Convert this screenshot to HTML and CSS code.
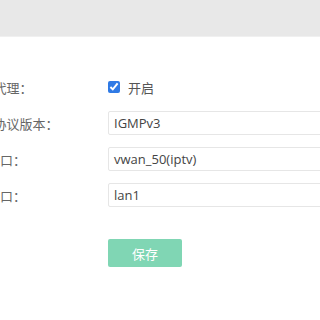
FILE: index.html
```html
<!DOCTYPE html>
<html lang="zh-CN">
<head>
    <meta charset="UTF-8">
    <meta name="viewport" content="width=device-width, initial-scale=1.0">
    <title>IGMP代理</title>
    <link rel="stylesheet" href="styles.css">
</head>
<body>
    <div class="topbar"></div>
    <form class="igmp-form">
        <div class="form-row">
            <label class="form-row__label">IGMP代理：</label>
            <div class="form-row__field">
                <label class="check">
                    <input type="checkbox" class="check__box" checked>
                    <span class="check__text">开启</span>
                </label>
            </div>
        </div>
        <div class="form-row">
            <label class="form-row__label">IGMP协议版本：</label>
            <div class="form-row__field">
                <div class="select">IGMPv3</div>
            </div>
        </div>
        <div class="form-row">
            <label class="form-row__label">上行接口：</label>
            <div class="form-row__field">
                <div class="select">vwan_50(iptv)</div>
            </div>
        </div>
        <div class="form-row">
            <label class="form-row__label">下行接口：</label>
            <div class="form-row__field">
                <div class="select">lan1</div>
            </div>
        </div>
        <div class="form-actions">
            <button type="button" class="btn-save">保存</button>
        </div>
    </form>
</body>
</html>
```

FILE: styles.css
```css
* {
    margin: 0;
    padding: 0;
    box-sizing: border-box;
}

body {
    background-color: #fff;
    font-family: "Open Sans", "Noto Sans CJK SC", sans-serif;
    font-size: 13px;
    color: #555;
    overflow: hidden;
}

.topbar {
    height: 37px;
    background-color: #e8e8e8;
    border-bottom: 1px solid #f0f0f0;
}

/* the label column starts left of the visible area */
.igmp-form {
    margin-left: -39px;
    padding-top: 38px;
}

.form-row {
    display: flex;
    align-items: center;
    height: 24px;
    margin-bottom: 12px;
}

.form-row__label {
    width: 147px;
    flex-shrink: 0;
    color: #666;
}

.form-row__field {
    flex: 1;
    display: flex;
    align-items: center;
}

.check {
    display: flex;
    align-items: center;
    gap: 8px;
}

.check__box {
    width: 12px;
    height: 12px;
    margin: 0;
    accent-color: #2f7ae5;
}

.check__text {
    color: #555;
}

.select {
    width: 260px;
    height: 24px;
    line-height: 22px;
    padding: 0 5px;
    border: 1px solid #e6e6e6;
    border-radius: 2px;
    color: #444;
    white-space: nowrap;
}

.form-actions {
    padding-left: 147px;
    margin-top: 32px;
}

.btn-save {
    width: 74px;
    height: 28px;
    border: none;
    border-radius: 2px;
    background-color: #80d6b4;
    color: #fff;
    font-family: inherit;
    font-size: 13px;
}
```
